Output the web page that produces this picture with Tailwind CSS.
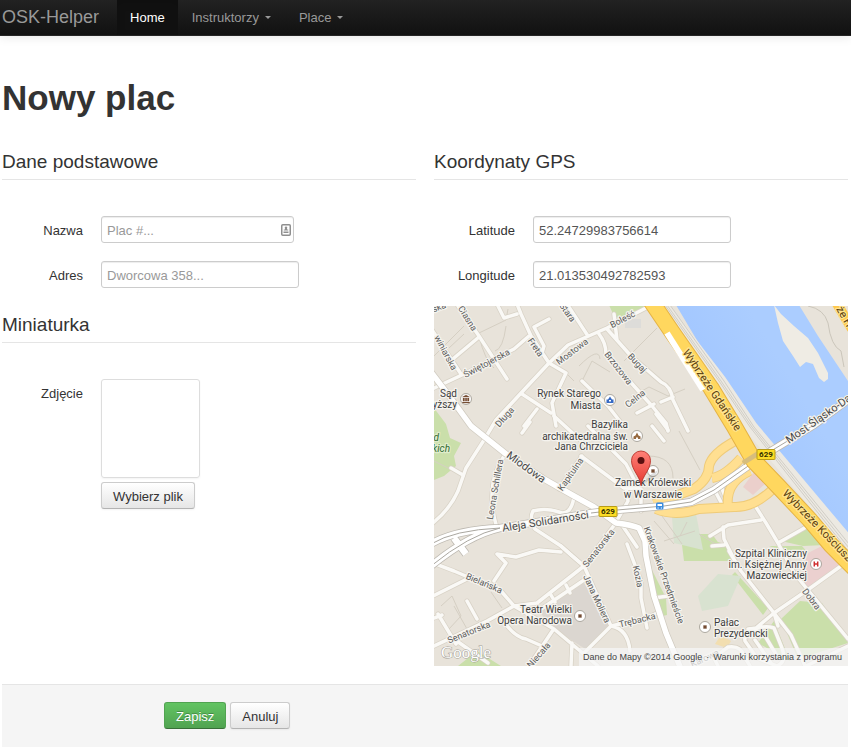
<!DOCTYPE html>
<html lang="pl">
<head>
<meta charset="utf-8">
<meta name="viewport" content="width=device-width, initial-scale=1">
<title>OSK-Helper – Nowy plac</title>
<script src="https://cdn.jsdelivr.net/npm/@tailwindcss/browser@4"></script>
</head>
<body class="bg-white font-['Liberation_Sans',Arial,sans-serif] text-[13px] leading-[18px] text-[#333]">

<nav class="flex h-9 items-stretch border-b border-[#252525] bg-linear-to-b from-[#222] to-[#111] text-[#999] shadow-[0_1px_10px_rgba(0,0,0,0.1)]">
  <a href="#" class="flex items-center pr-[18px] pb-px pl-[2px] text-[18px]">OSK-Helper</a>
  <a href="#" class="flex items-center bg-[#111] px-[13px] text-white shadow-[inset_0_3px_8px_rgba(0,0,0,0.125)]">Home</a>
  <a href="#" class="flex items-center gap-[6px] px-[14px]">Instruktorzy
    <svg class="h-[3px] w-[6px]" viewBox="0 0 6 3"><path d="M0 0h6L3 3z" fill="#999"/></svg></a>
  <a href="#" class="flex items-center gap-[6px] px-[14px]">Place
    <svg class="h-[3px] w-[6px]" viewBox="0 0 6 3"><path d="M0 0h6L3 3z" fill="#999"/></svg></a>
</nav>

<main class="pr-[3px] pl-[2px]">
  <h1 class="pt-11 pb-[27px] text-[35px] leading-9 font-bold">Nowy plac</h1>

  <form>
    <div class="grid grid-cols-2 gap-x-[18px]">
      <div>
        <section>
          <h2 class="mb-9 border-b border-[#e5e5e5] pt-[2px] text-[19px] leading-[34px]">Dane podstawowe</h2>
          <div class="mb-[18px] flex items-center gap-[18px]">
            <label for="name" class="w-[81px] pt-[2px] text-right">Nazwa</label>
            <div class="relative">
              <input id="name" type="text" placeholder="Plac #..." class="h-[27px] w-[193px] rounded-[3px] border border-[#ccc] bg-white px-[5px] pt-[2px] text-[#555] shadow-[inset_0_1px_1px_rgba(0,0,0,0.075)] placeholder:text-[#999]">
              <svg class="absolute top-2 right-[3px] h-3 w-[10px]" viewBox="0 0 10 12">
                <rect x="0.75" y="0.75" width="8.5" height="10.5" rx="1" fill="#fff" stroke="#8f8f8f" stroke-width="1.5"/>
                <path d="M5 2.500a1.200 1.200 0 0 1 1 2v1h1.200v1H2.800v-1H4v-1a1.200 1.200 0 0 1 1-2zM2.500 7.500h5v1.500h-5z" fill="#8f8f8f"/>
              </svg>
            </div>
          </div>
          <div class="mb-[18px] flex items-center gap-[18px]">
            <label for="address" class="w-[81px] pt-[2px] text-right">Adres</label>
            <input id="address" type="text" placeholder="Dworcowa 358..." class="h-[27px] w-[198px] rounded-[3px] border border-[#ccc] bg-white px-[5px] pt-[2px] text-[#555] shadow-[inset_0_1px_1px_rgba(0,0,0,0.075)] placeholder:text-[#999]">
          </div>
        </section>
        <section>
          <h2 class="mb-9 border-b border-[#e5e5e5] pt-[2px] text-[19px] leading-[34px]">Miniaturka</h2>
          <div class="flex items-start gap-[18px]">
            <label for="photo" class="w-[81px] pt-[6px] text-right">Zdjęcie</label>
            <div class="flex flex-col items-start gap-1">
              <div class="size-[99px] rounded-[3px] border border-[#ddd] shadow-[0_1px_2px_rgba(0,0,0,0.05)]"></div>
              <button id="photo" type="button" class="h-[27px] rounded-[3px] border border-[#ccc] border-b-[#b3b3b3] bg-linear-to-b from-white to-[#e6e6e6] px-[11px] pt-[2px] shadow-[0_1px_2px_rgba(0,0,0,0.05)]">Wybierz plik</button>
            </div>
          </div>
        </section>
      </div>

      <section>
        <h2 class="mb-9 border-b border-[#e5e5e5] pt-[2px] text-[19px] leading-[34px]">Koordynaty GPS</h2>
        <div class="mb-[18px] flex items-center gap-[18px]">
          <label for="lat" class="w-[81px] pt-[2px] text-right">Latitude</label>
          <input id="lat" type="text" value="52.24729983756614" class="h-[27px] w-[198px] rounded-[3px] border border-[#ccc] bg-white px-[5px] pt-[2px] text-[#555] shadow-[inset_0_1px_1px_rgba(0,0,0,0.075)]">
        </div>
        <div class="mb-[18px] flex items-center gap-[18px]">
          <label for="lng" class="w-[81px] pt-[2px] text-right">Longitude</label>
          <input id="lng" type="text" value="21.013530492782593" class="h-[27px] w-[198px] rounded-[3px] border border-[#ccc] bg-white px-[5px] pt-[2px] text-[#555] shadow-[inset_0_1px_1px_rgba(0,0,0,0.075)]">
        </div>

        <div class="relative overflow-hidden bg-[#e8e3da]">
          <svg class="block h-[360px] w-full font-[Roboto,sans-serif]" viewBox="0 0 414 360" preserveAspectRatio="xMidYMid slice">
            <defs>
              <linearGradient id="water" gradientUnits="userSpaceOnUse" x1="285" y1="110" x2="355" y2="68">
                <stop offset="0" stop-color="#8fb9fb"/><stop offset="0.25" stop-color="#a4c8ff"/><stop offset="1" stop-color="#abcdff"/>
              </linearGradient>
              <linearGradient id="pin" x1="0" y1="0" x2="0" y2="1"><stop offset="0" stop-color="#ff8178"/><stop offset="1" stop-color="#e5382f"/></linearGradient>
              <g id="streets">
                <path d="M-2 83L30 68 80 43 95 30M24 0L45 30 73 73M20 52L45 31M-2 24L27 68M63 -2L70 12 83 8M83 -2L87 8 97 30 115 57 132 67 118 97 122 120M115 13L100 21 110 40 108 47M-1 217Q16 203 24 185L32 162 50 134 62 114 88 86 115 57"/>
                <path d="M115 57L134 39 173 22 212 2M173 23L197 50 227 76Q237 80 239 94L254 125M165 28Q172 37 172 48L200 80 218 100 232 117 234 125M203 107L220 98M227 96L239 91M133 -2L154 30M88 88L117 107M103 103L90 120M180 8L183 34M148 75L174 100 188 118"/>
                <path d="M70 150Q50 180 63 222M17 162L29 169M88 127L96 116M125 183L148 150M120 110L155 142M147 150L190 182 207 183 207 205M192 182L194 195 181 218 150 260M188 219L203 241M218 120L230 135M222 108L234 124M140 190Q138 207 128 207 112 201 99 205 95 213 101 223L127 240 150 260M154 120L192 158 205 183"/>
                <path d="M-1 257L20 265 67 285 80 300 53 315 -2 341M80 300L120 323 164 360M150 260L103 297 80 300M153 272L107 303M117 289L121 296M132 279L136 287M67 312Q80 331 92 333L108 340M95 360L119 324M127 240Q140 252 150 260L158 278 177 320Q194 323 196 345M150 347L177 320 213 312 225 306M60 275L72 257 63 248 82 251 105 244 127 246M-1 290L33 273M33 295L43 313M4 308L22 338M0 312L8 309M20 333L54 357M193 238L207 275 207 292 213 322M137 360L138 337"/>
                <path d="M280 183L289 200M287 180L294 198M276 230L294 219 327 214M289 221L290 233 299 251M320 198L332 217 344 237 360 267 414 333M344 237L374 220M295 245L307 265 340 307 357 329 372 362M278 240L290 239M284 360L280 352 294 341Q307 339 310 350L316 360M372 360L414 340M220 292L234 290"/>
                <path d="M407 260L375 283 340 307 322 322 314 323M340 307L344 320M316 326Q329 318 340 322L348 342Q353 356 343 360L323 352 311 335Q310 329 316 326M321 334L337 357M331 330L343 350"/>
              </g>
            </defs>
            <rect width="414" height="360" fill="#e8e3da"/>

            <g fill="#cadfaa">
              <path d="M0 102L12 118 16 132 27 137 20 150 22 160 10 170 0 174zM175 -1H213L188 13 180 10zM246 223L296 240 297 255 250 255zM260 228H278L297 254H265zM335 240H368L374 247 360 249zM347 235L374 221 391 239 369 240zM301 266L334 302 329 309 298 269zM366 295L388 297 414 337 364 353 347 313zM340 315L356 355 324 337zM217 262L232 292 233 309 224 311 219 284zM24 360L43 345 67 360z"/>
            </g>
            <path d="M264 290L284 268 307 270 294 300 268 305zM238 211L262 208 269 244 240 237z" fill="#d8e2d0"/>
            <path d="M374 247L390 239 413 259 374 281 366 273z" fill="#ebd0cf"/>
            <path d="M103 303L150 277 177 320 153 344 120 323z" fill="#dbd6d0"/>
            <path d="M287 329L297 335 293 342 281 338z" fill="#f2deb0"/>
            <rect x="191" y="13" width="16" height="9" fill="#dddcd9"/>

            <path d="M45 27L72 14 74 3M45 30Q51 55 60 62M72 20Q69 43 61 45M223 22L190 55M145 60Q165 40 166 53M148 75L158 55 176 66M251 83L234 90 215 81 197 91M132 67L140 75M0 50L30 20M15 42L30 28M214 150Q239 150 239 172M245 125L266 164M7 300L18 290 27 310 15 323M20 300L37 330M57 286L68 302M220 215L240 238M228 210L248 238M253 216L246 230M230 235L261 225M265 228L285 240M0 155L18 164" fill="none" stroke="#d5cfc3"/>

            <path d="M242 -1H365L384 30 414 75V236L314 120z" fill="url(#water)"/>
            <path d="M340 -1L347 8 360 20 374 32 384 47 394 67 394 73 390 76 385 72 379 58 372 56 366 61 359 50 349 35 344 17z" fill="#efece4"/>
            <path d="M374 0Q390 3 394 17 397 40 407 45L410 61" fill="none" stroke="#cbc6bb"/>
            <path d="M402 -4L418 23" stroke="#ffc84c" stroke-width="10"/>

            <path d="M226 -3L286 75 317 121 417 240" fill="none" stroke="#ece9e2" stroke-width="13"/>
            <path d="M236 -1L290 75 320 121 415 238M231 -1L285 75 316 121 415 246M233 -1L287 75 318 121 415 242" fill="none" stroke="#c9c6bf" stroke-width="0.800"/>

            <g fill="none" stroke="#d8d2c6" stroke-width="5" stroke-linejoin="round" stroke-linecap="round"><use href="#streets"/></g>
            <g fill="none" stroke="#faf9f6" stroke-width="3.500" stroke-linejoin="round" stroke-linecap="round"><use href="#streets"/></g>

            <g fill="none" stroke-linejoin="round">
              <path d="M303 134Q278 147 275 160 275 173 260 183L220 198M222 203Q241 211 265 203L300 201Q320 202 340 182M278 172Q291 170 307 152M294 201Q291 176 316 165" stroke="#efcb79" stroke-width="10"/>
              <path d="M303 134Q278 147 275 160 275 173 260 183L220 198M222 203Q241 211 265 203L300 201Q320 202 340 182M278 172Q291 170 307 152M294 201Q291 176 316 165" stroke="#ffdf91" stroke-width="8"/>
            </g>
            <path d="M309 181L320 166 332 177 319 189z" fill="#ebcfcb"/>

            <g fill="none" stroke-linejoin="round">
              <path d="M-3 66L16 91 37 120 72 148 110 173 140 190 160 201 182 217Q198 219 205 222L211 235 212 250 220 290 232 327 247 363" stroke="#d0cbc0" stroke-width="7"/>
              <path d="M-3 66L16 91 37 120 72 148 110 173 140 190 160 201 182 217Q198 219 205 222L211 235 212 250 220 290 232 327 247 363" stroke="#fff" stroke-width="5.500"/>
              <path d="M-3 238Q20 224 66 222L157 207 183 204 230 200 257 196 280 184 317 158 337 145 380 119 418 91M66 222Q35 229 -3 260M20 232L32 248" stroke="#bdb9b1" stroke-width="8"/>
              <path d="M-3 238Q20 224 66 222L157 207 183 204 230 200 257 196 280 184 317 158 337 145 380 119 418 91M66 222Q35 229 -3 260M20 232L32 248" stroke="#fff" stroke-width="6.500"/>
              <path d="M-3 238Q20 224 66 222M66 222Q35 229 -3 260M157 207L183 204 230 200 257 196 280 184 317 158 337 145 380 119 418 91" stroke="#aaa7a0"/>
              <path d="M217 -5L238 26 277 82 300 120 320 155 344 180 375 213 397 239 420 262" stroke="#e5b345" stroke-width="17"/>
              <path d="M217 -5L238 26 277 82 300 120 320 155 344 180 375 213 397 239 420 262" stroke="#ffd75e" stroke-width="15"/>
              <path d="M233 27L269 84" stroke="#fff" stroke-width="6"/>
              <path d="M309 157L328 145" stroke="#d6bd7d" stroke-width="5"/>
            </g>

            <g fill="#5b5b5b" stroke="#f5f3ee" stroke-width="2.500" paint-order="stroke" stroke-linejoin="round" font-size="9" text-anchor="middle">
              <text transform="translate(6 4) rotate(-20)">ska</text>
              <text transform="translate(31 14) rotate(58)">Ciasna</text>
              <text transform="translate(9 48) rotate(62)">winiarska</text>
              <text transform="translate(54 60) rotate(-28)">Świętojerska</text>
              <text transform="translate(99 43) rotate(55)">Freta</text>
              <text transform="translate(131 8) rotate(55)">Stara</text>
              <text transform="translate(140 48) rotate(-37)">Mostowa</text>
              <text transform="translate(190 16) rotate(-27)">Boleść</text>
              <text transform="translate(182 64) rotate(52)">Brzozowa</text>
              <text transform="translate(201 59) rotate(47)">Bugaj</text>
              <text transform="translate(203 95) rotate(-38)">Celna</text>
              <text transform="translate(73 113) rotate(-49)">Długa</text>
              <text transform="translate(64 184) rotate(-80)">Leona Schillera</text>
              <text transform="translate(139 170) rotate(-55)">Kapitulna</text>
              <text transform="translate(167 244) rotate(-52)">Senatorska</text>
              <text transform="translate(227 270) rotate(70)">Krakowskie Przedmieście</text>
              <text transform="translate(201 271) rotate(78)">Kozia</text>
              <text transform="translate(160 294) rotate(65)">Jana Moliera</text>
              <text transform="translate(49 280) rotate(23)">Bielańska</text>
              <text transform="translate(36 329) rotate(-22)">Senatorska</text>
              <text transform="translate(107 351) rotate(-49)">Niecała</text>
              <text transform="translate(204 317) rotate(-14)">Trębacka</text>
              <text transform="translate(375 295) rotate(52)">Dobra</text>
              <text transform="translate(272 355) rotate(-25)">Karowa</text>
              <g font-size="11" fill="#484848">
                <text transform="translate(90 164) rotate(36)">Miodowa</text>
                <text transform="translate(112 219) rotate(-9)">Aleja Solidarności</text>
                <text transform="translate(355 138) rotate(-35)" text-anchor="start">Most Śląsko-Da</text>
              </g>
              <g font-size="11" fill="#5b400e" stroke="#ffe48f">
                <text transform="translate(275 86) rotate(56)">Wybrzeże Gdańskie</text>
                <text transform="translate(348 188) rotate(46)" text-anchor="start">Wybrzeże Kościusz</text>
                <text transform="translate(402 3) rotate(60)" text-anchor="start">że H</text>
              </g>
            </g>

            <g fill="#3d3d3d" stroke="#f5f3ee" stroke-width="2.500" paint-order="stroke" stroke-linejoin="round" font-size="10">
              <g text-anchor="end">
                <text x="23" y="91">Sąd</text><text x="23" y="102">yższy</text>
                <text x="167" y="91">Rynek Starego</text><text x="167" y="103">Miasta</text>
                <text x="194" y="122">Bazylika</text><text x="194" y="134">archikatedralna św.</text><text x="194" y="144">Jana Chrzciciela</text>
                <text x="138" y="307">Teatr Wielki</text><text x="138" y="318">Opera Narodowa</text>
                <text x="373" y="251">Szpital Kliniczny</text><text x="373" y="262">im. Księżnej Anny</text><text x="373" y="273">Mazowieckiej</text>
              </g>
              <g text-anchor="middle"><text x="219" y="180">Zamek Królewski</text><text x="219" y="192">w Warszawie</text></g>
              <text x="280" y="320">Pałac</text><text x="280" y="331">Prezydencki</text>
              <g fill="#336b31" stroke="#dfeccb" font-style="italic" text-anchor="end"><text x="5" y="135">d</text><text x="16" y="146">kich</text></g>
            </g>

            <g fill="#fff" stroke="#9a958c" stroke-width="0.800">
              <circle cx="32" cy="93" r="5.500"/><circle cx="176" cy="94" r="5.500"/><circle cx="203" cy="130" r="5.500"/><circle cx="219" cy="165" r="5.500"/><circle cx="146" cy="310" r="5.500"/><circle cx="271" cy="321" r="5.500"/><circle cx="382" cy="258" r="5.500"/>
            </g>
            <path d="M28.500 91L32 89 35.500 91zM29 92h1.500v3H29zM31.300 92h1.500v3h-1.500zM33.500 92H35v3h-1.500zM28.500 96h7v1h-7zM217.500 163.500h3v3h-3zM144.500 308.500h3v3h-3zM269.500 319.500h3v3h-3z" fill="#754c32" stroke="#754c32" stroke-width="0.300"/>
            <path d="M172.500 97V93.500H174L176 90.500 178 93.500H179.500V97zM175 95.500h2V94h-2z" fill="#3569c4" fill-rule="evenodd"/>
            <path d="M199.500 133V130.500L201.500 129.500 203 126.500 204.500 129.500 206.500 130.500V133H204V131.500H202V133z" fill="#96693f"/>
            <path d="M380.300 255.500V260.500M383.700 255.500V260.500M380.300 258H383.700" fill="none" stroke="#cf2f2f" stroke-width="1.500"/>
            <rect x="222" y="196.500" width="7.500" height="7" rx="1.500" fill="#3b8de0"/>
            <path d="M223.500 198h4.500v2h-4.500zM223.500 201.500h1.200v1h-1.200zM226.800 201.500H228v1h-1.200z" fill="#fff"/>

            <g font-size="8" font-weight="700" text-anchor="middle" fill="#343000">
              <rect x="165" y="200.500" width="18" height="10" rx="1" fill="#fbdc26" stroke="#b89c17"/><text x="174" y="208">629</text>
              <rect x="323" y="143.500" width="18" height="10" rx="1" fill="#fbdc26" stroke="#b89c17"/><text x="332" y="151">629</text>
            </g>

            <path d="M207 179L216 169 224 164 221 171z" fill="#000" opacity="0.120"/>
            <path d="M207 179.500C206 170 197.500 164 197.500 154.500A9.500 9.500 0 0 1 216.500 154.500C216.500 164 208 170 207 179.500z" fill="url(#pin)" stroke="#b9332b" stroke-width="0.900"/>
            <circle cx="207" cy="154.500" r="3.500" fill="#5a1010"/>

            <text x="7" y="352" font-family="Liberation Serif, serif" font-size="17" fill="#fff" stroke="#a39f97" stroke-width="1" paint-order="stroke">Google</text>
          </svg>
          <div class="absolute right-0 bottom-0 flex h-[18px] items-center gap-1 bg-[#f5f5f5]/75 pr-[6px] pl-1 font-['Liberation_Sans',Arial,sans-serif] text-[9px] text-[#444]">
            <span>Dane do Mapy ©2014 Google</span><span>·</span><a href="#">Warunki korzystania z programu</a>
          </div>
        </div>
      </section>
    </div>

    <div class="mt-[18px] flex gap-1 border-t border-[#e5e5e5] bg-[#f5f5f5] pt-[17px] pb-[18px] pl-[162px]">
      <button type="submit" class="h-[27px] rounded-[3px] border border-[#51a351] border-b-[#387038] bg-linear-to-b from-[#62c462] to-[#51a351] px-[11px] pt-[2px] text-white [text-shadow:0_-1px_0_rgba(0,0,0,0.25)]">Zapisz</button>
      <button type="button" class="h-[27px] rounded-[3px] border border-[#ccc] border-b-[#b3b3b3] bg-linear-to-b from-white to-[#e6e6e6] px-[11px] pt-[2px] shadow-[0_1px_2px_rgba(0,0,0,0.05)]">Anuluj</button>
    </div>
  </form>
</main>
</body>
</html>
